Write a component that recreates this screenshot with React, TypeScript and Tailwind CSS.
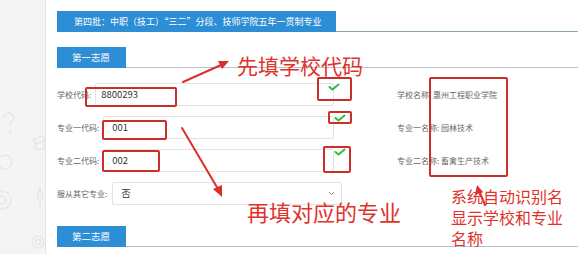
import { ChevronDown } from 'lucide-react'

const cjk = "font-['Noto_Sans_CJK_SC','Noto_Sans',sans-serif]"

const SidebarDoodles = () => (
  <svg width="46" height="254" viewBox="0 0 46 254" fill="none" stroke="#e4e4e4" strokeWidth="1.1">
    <path d="M3 118 q4 -8 10 -3 q3 5 -3 8 l0 4" />
    <circle cx="10" cy="132" r="1" />
    <path d="M33 140 l9 -4 l4 4 l-9 4 z M35 143 l0 5 q5 3 9 0 l0 -5" />
    <circle cx="5" cy="162" r="7" />
    <circle cx="2" cy="200" r="9" />
    <circle cx="2" cy="200" r="4" />
    <path d="M40 187 l-3 12 l6 0 z M40 199 l0 12" />
    <circle cx="38" cy="242" r="6" />
    <circle cx="38" cy="242" r="2.5" />
  </svg>
)

const Check = ({ x, y }: { x: number; y: number }) => (
  <svg
    className="absolute"
    style={{ left: x - 6, top: y - 4 }}
    width="12"
    height="8"
    viewBox="0 0 12 8"
    fill="none"
    stroke="#36b83a"
    strokeWidth="2"
    strokeLinecap="round"
    strokeLinejoin="round"
  >
    <path d="M1.5 4 L4.5 6.5 L10.5 1.5" />
  </svg>
)

const Tab = ({ label }: { label: string }) => (
  <div className="flex items-end">
    <div className="w-[69px] h-[21px] bg-[#2d8ed6] text-white text-[9.5px] flex items-center pl-[15px]">
      {label}
    </div>
    <div className="flex-1 border-b border-[#b9c3cb]" />
  </div>
)

const Field = ({
  label,
  value,
  pad,
  info,
}: {
  label: string
  value: string
  pad: string
  info?: string
}) => (
  <div className="grid grid-cols-[285px_1fr] h-[23px] items-center">
    <div className="flex items-center pr-[8px] h-full">
      <span className="text-[8px] text-[#666] whitespace-nowrap">{label}</span>
      <div
        className={`ml-[4px] flex-1 h-full border border-[#e3e3e3] rounded-[2px] bg-white flex items-center text-[9.5px] text-[#333] ${pad}`}
      >
        {value}
      </div>
    </div>
    <div className="pl-[55px] text-[8px] text-[#666] whitespace-nowrap">{info}</div>
  </div>
)

export default function App() {
  return (
    <div className={`relative w-[578px] h-[254px] overflow-hidden flex bg-white ${cjk}`}>
      <aside className="w-[46px] shrink-0 bg-[#f4f4f4] border-r border-[#e4e4e4]">
        <SidebarDoodles />
      </aside>

      <main className="flex-1 pl-[11px] pt-[11px]">
        <div className="flex items-end">
          <div className="w-[279px] h-[21px] bg-[#2d8ed6] text-white text-[9px] flex items-center pl-[17px] whitespace-nowrap">
            第四批：中职（技工）“三二”分段、技师学院五年一贯制专业
          </div>
          <div className="flex-1 border-b-[1.5px] border-[#8ca3b4]" />
        </div>

        <div className="mt-[15px]">
          <Tab label="第一志愿" />
        </div>

        <div className="mt-[15px] flex flex-col gap-[10px]">
          <Field label="学校代码:" value="8800293" pad="pl-[5px]" info="学校名称: 惠州工程职业学院" />
          <Field label="专业一代码:" value="001" pad="pl-[8px]" info="专业一名称: 园林技术" />
          <Field label="专业二代码:" value="002" pad="pl-[8px]" info="专业二名称: 畜禽生产技术" />
          <div className="flex items-center h-[23px] w-[285px]">
            <span className="text-[8px] text-[#666] whitespace-nowrap">服从其它专业:</span>
            <div className="ml-[5px] flex-1 h-full border border-[#e3e3e3] rounded-[2px] flex items-center justify-between pl-[8px] pr-[5px] text-[9.5px] text-[#333]">
              <span>否</span>
              <ChevronDown size={9} strokeWidth={2} color="#555" />
            </div>
          </div>
        </div>

        <div className="mt-[21px]">
          <Tab label="第二志愿" />
        </div>
      </main>

      {/* annotations drawn over the form */}
      <div className="absolute inset-0 pointer-events-none">
        <div className="absolute left-[85px] top-[87px] w-[92px] h-[20px] border-2 border-[#cc2f2a] rounded-[2px]" />
        <div className="absolute left-[102px] top-[120px] w-[65px] h-[20px] border-2 border-[#cc2f2a] rounded-[2px]" />
        <div className="absolute left-[102px] top-[150px] w-[58px] h-[22px] border-2 border-[#cc2f2a] rounded-[2px]" />
        <div className="absolute left-[317px] top-[77px] w-[35px] h-[24px] border-2 border-[#cc2f2a] rounded-[2px]" />
        <div className="absolute left-[328px] top-[111px] w-[24px] h-[13px] border-2 border-[#cc2f2a] rounded-[2px]" />
        <div className="absolute left-[323px] top-[146px] w-[28px] h-[27px] border-2 border-[#cc2f2a] rounded-[2px]" />
        <div className="absolute left-[429px] top-[77px] w-[79px] h-[100px] border-2 border-[#cc2f2a] rounded-[2px]" />

        <Check x={334} y={87} />
        <Check x={340} y={118} />
        <Check x={340} y={152} />

        <svg className="absolute inset-0" width="578" height="254" viewBox="0 0 578 254">
          <g stroke="#d9302b" strokeWidth="2" strokeLinecap="round" fill="#d9302b">
            <line x1="183" y1="82" x2="221" y2="65" />
            <polygon points="229,61 218,61 222,69" stroke="none" />
            <line x1="182" y1="128" x2="218" y2="189" />
            <polygon points="222,197 213,189 222,185" stroke="none" />
            <line x1="485" y1="205" x2="480" y2="193" />
            <polygon points="477,185 475,195 483,192" stroke="none" />
          </g>
        </svg>

        <div className="absolute left-[237px] top-[55px] text-[21px] leading-none text-[#e0322b] whitespace-nowrap">
          先填学校代码
        </div>
        <div className="absolute left-[247px] top-[200px] text-[22px] leading-none text-[#e0322b] whitespace-nowrap">
          再填对应的专业
        </div>
        <div className="absolute left-[451px] top-[188px] flex flex-col text-[16px] leading-none text-[#e0322b] whitespace-nowrap">
          <span className="h-[21px]">系统自动识别名</span>
          <span className="h-[21px]">显示学校和专业</span>
          <span className="h-[21px]">名称</span>
        </div>
      </div>
    </div>
  )
}
